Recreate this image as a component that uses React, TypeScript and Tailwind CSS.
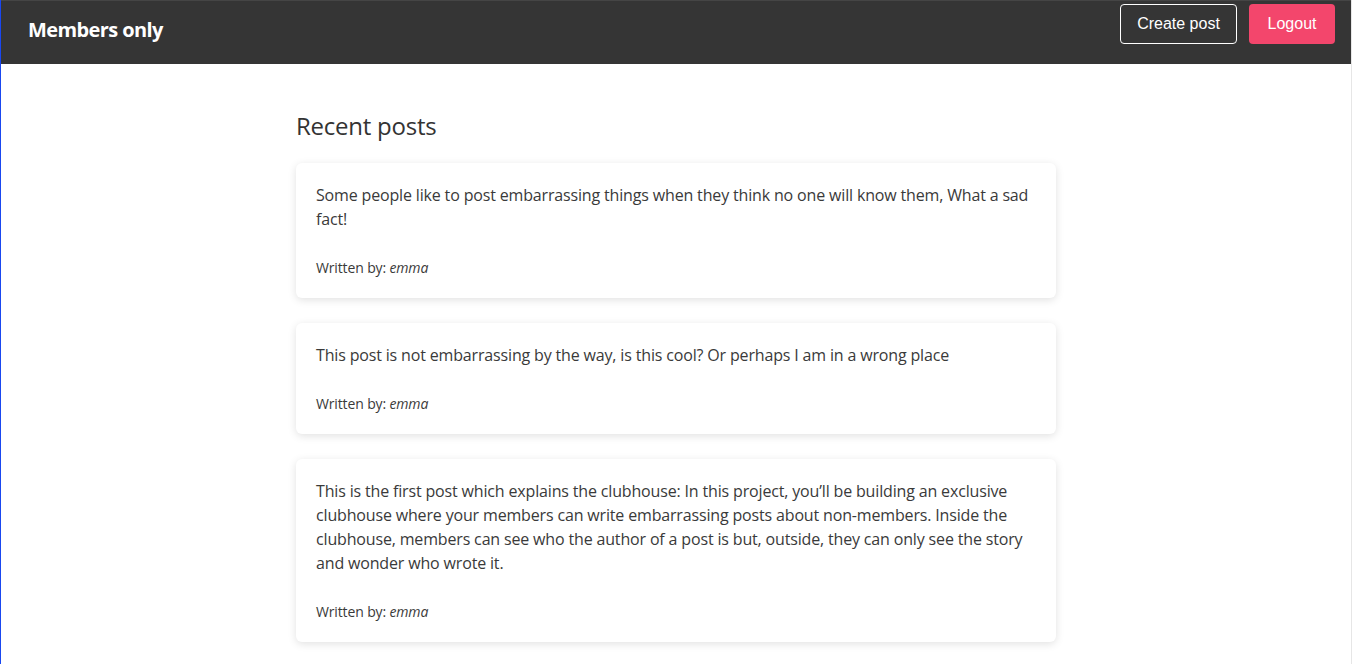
import React from "react";

const posts = [
  {
    text: "Some people like to post embarrassing things when they think no one will know them, What a sad fact!",
    author: "emma",
  },
  {
    text: "This post is not embarrassing by the way, is this cool? Or perhaps I am in a wrong place",
    author: "emma",
  },
  {
    text: "This is the first post which explains the clubhouse: In this project, you\u2019ll be building an exclusive clubhouse where your members can write embarrassing posts about non-members. Inside the clubhouse, members can see who the author of a post is but, outside, they can only see the story and wonder who wrote it.",
    author: "emma",
  },
];

export default function App() {
  return (
    <div className="min-h-screen bg-white border-l border-l-[#1947f0] border-r border-r-[#e6e6e6] font-['Open_Sans',sans-serif] text-[#3a3a3a]">
      <header className="h-16 bg-[#353535] border-t border-t-[#454545] flex justify-between">
        <h1 className="pl-[27px] pt-[15px] text-[20px] leading-[28px] font-bold text-white tracking-[-0.03em]">
          Members only
        </h1>
        <div className="flex items-start gap-3 pt-[3px] pr-4 font-['Liberation_Sans',Arial,sans-serif]">
          <button className="h-10 w-[117px] rounded border border-white text-white text-[16px]">
            Create post
          </button>
          <button className="h-10 w-[86px] rounded bg-[#f3466c] text-white text-[16px]">
            Logout
          </button>
        </div>
      </header>
      <main className="w-[760px] mx-auto pt-[46px] pb-10">
        <h2 className="text-[24px] leading-8 text-[#333] tracking-[-0.01em]">Recent posts</h2>
        <div className="mt-[21px] flex flex-col gap-[25px]">
          {posts.map((p, i) => (
            <div
              key={i}
              className="bg-white rounded-md shadow-[0_2px_8px_rgba(0,0,0,0.12)] px-5 pt-5 pb-5"
            >
              <p className="text-[16px] leading-6 tracking-[-0.01em]">{p.text}</p>
              <p className="mt-[26px] text-[14px] leading-[21px] tracking-[-0.01em]">
                Written by: <em>{p.author}</em>
              </p>
            </div>
          ))}
        </div>
      </main>
    </div>
  );
}
